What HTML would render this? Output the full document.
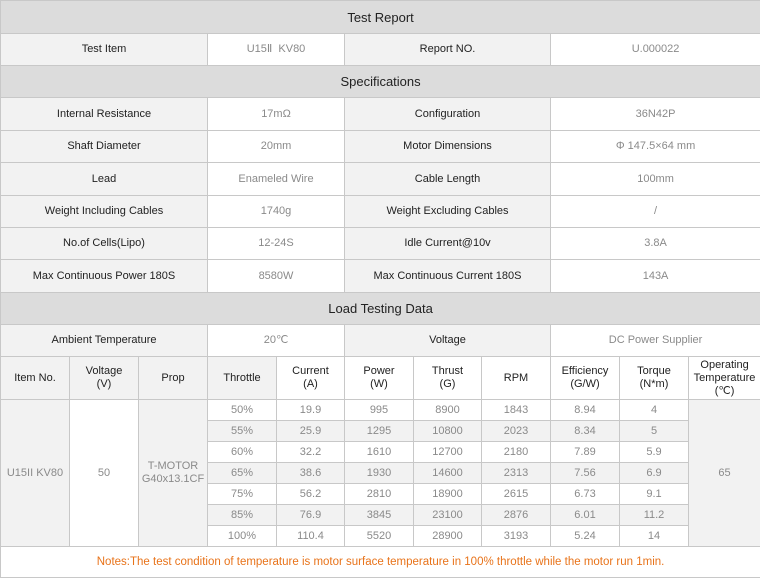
<!DOCTYPE html>
<html><head><meta charset="utf-8"><style>
body{margin:0;width:760px;height:578px;overflow:hidden;background:#fff;font-family:"Liberation Sans",Arial,sans-serif;}
table{border-collapse:collapse;table-layout:fixed;width:760px;}
td{border:1px solid #c8c8c8;text-align:center;font-size:11px;color:#222;padding:0;line-height:13px;}
.h{background:#dcdcdc;font-size:13px;color:#222;}
.l{background:#f2f2f2;}
.v{background:#fff;color:#8a8a8a;}
.g{background:#f2f2f2;color:#8a8a8a;}
.d td{height:20px;color:#8a8a8a;}
.note{color:#e8731a;font-size:11.5px;background:#fff;}
</style></head><body>
<table>
<colgroup><col style="width:69px"><col style="width:69px"><col style="width:69px"><col style="width:69px"><col style="width:68px"><col style="width:69px"><col style="width:68px"><col style="width:69px"><col style="width:69px"><col style="width:69px"><col style="width:72px"></colgroup>
<tr style="height:33px"><td class="h" colspan="11">Test Report</td></tr>
<tr style="height:32px"><td class="l" colspan="3">Test Item</td><td class="v" colspan="2">U15Ⅱ&nbsp; KV80</td><td class="l" colspan="3">Report NO.</td><td class="v" colspan="3">U.000022</td></tr>
<tr style="height:32px"><td class="h" colspan="11">Specifications</td></tr>
<tr style="height:33px"><td class="l" colspan="3">Internal Resistance</td><td class="v" colspan="2">17mΩ</td><td class="l" colspan="3">Configuration</td><td class="v" colspan="3">36N42P</td></tr>
<tr style="height:32px"><td class="l" colspan="3">Shaft Diameter</td><td class="v" colspan="2">20mm</td><td class="l" colspan="3">Motor Dimensions</td><td class="v" colspan="3">Φ 147.5×64 mm</td></tr>
<tr style="height:33px"><td class="l" colspan="3">Lead</td><td class="v" colspan="2">Enameled Wire</td><td class="l" colspan="3">Cable Length</td><td class="v" colspan="3">100mm</td></tr>
<tr style="height:32px"><td class="l" colspan="3">Weight Including Cables</td><td class="v" colspan="2">1740g</td><td class="l" colspan="3">Weight Excluding Cables</td><td class="v" colspan="3">/</td></tr>
<tr style="height:32px"><td class="l" colspan="3">No.of Cells(Lipo)</td><td class="v" colspan="2">12-24S</td><td class="l" colspan="3">Idle Current@10v</td><td class="v" colspan="3">3.8A</td></tr>
<tr style="height:33px"><td class="l" colspan="3">Max Continuous Power 180S</td><td class="v" colspan="2">8580W</td><td class="l" colspan="3">Max Continuous Current 180S</td><td class="v" colspan="3">143A</td></tr>
<tr style="height:32px"><td class="h" colspan="11">Load Testing Data</td></tr>
<tr style="height:32px"><td class="l" colspan="3">Ambient Temperature</td><td class="v" colspan="2">20℃</td><td class="l" colspan="3">Voltage</td><td class="v" colspan="3">DC Power Supplier</td></tr>
<tr style="height:43px"><td class="l">Item No.</td><td class="l">Voltage<br>(V)</td><td class="l">Prop</td><td class="l">Throttle</td><td>Current<br>(A)</td><td>Power<br>(W)</td><td>Thrust<br>(G)</td><td>RPM</td><td>Efficiency<br>(G/W)</td><td>Torque<br>(N*m)</td><td>Operating<br>Temperature<br>(℃)</td></tr>
<tr class="d"><td class="g" rowspan="7">U15II KV80</td><td class="v" rowspan="7">50</td><td class="g" rowspan="7">T-MOTOR<br>G40x13.1CF</td><td class="v">50%</td><td class="v">19.9</td><td class="v">995</td><td class="v">8900</td><td class="v">1843</td><td class="v">8.94</td><td class="v">4</td><td class="g" rowspan="7">65</td></tr>
<tr class="d"><td class="g">55%</td><td class="g">25.9</td><td class="g">1295</td><td class="g">10800</td><td class="g">2023</td><td class="g">8.34</td><td class="g">5</td></tr>
<tr class="d"><td class="v">60%</td><td class="v">32.2</td><td class="v">1610</td><td class="v">12700</td><td class="v">2180</td><td class="v">7.89</td><td class="v">5.9</td></tr>
<tr class="d"><td class="g">65%</td><td class="g">38.6</td><td class="g">1930</td><td class="g">14600</td><td class="g">2313</td><td class="g">7.56</td><td class="g">6.9</td></tr>
<tr class="d"><td class="v">75%</td><td class="v">56.2</td><td class="v">2810</td><td class="v">18900</td><td class="v">2615</td><td class="v">6.73</td><td class="v">9.1</td></tr>
<tr class="d"><td class="g">85%</td><td class="g">76.9</td><td class="g">3845</td><td class="g">23100</td><td class="g">2876</td><td class="g">6.01</td><td class="g">11.2</td></tr>
<tr class="d"><td class="v">100%</td><td class="v">110.4</td><td class="v">5520</td><td class="v">28900</td><td class="v">3193</td><td class="v">5.24</td><td class="v">14</td></tr>
<tr style="height:31px"><td class="note" colspan="11">Notes:The test condition of temperature is motor surface temperature in 100% throttle while the motor run 1min.</td></tr>
</table>
</body></html>
